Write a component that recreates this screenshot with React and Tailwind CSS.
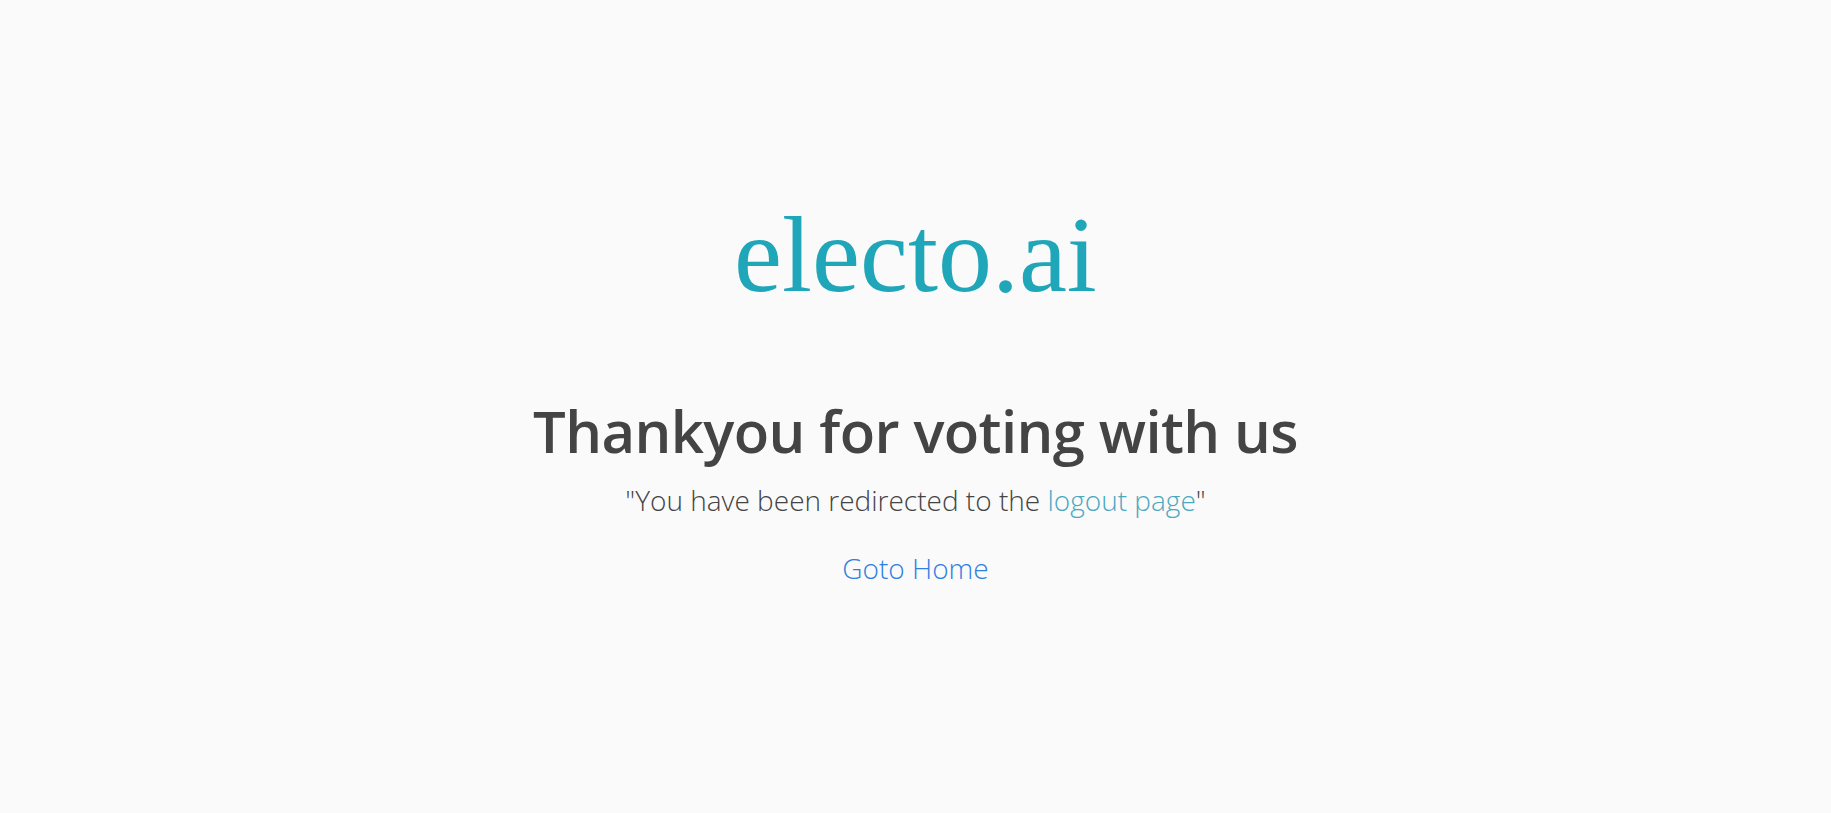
export default function App() {
  return (
    <div className="min-h-[813px] w-full bg-[#fafafa] flex flex-col items-center pt-[201px] font-['Open_Sans',sans-serif]">
      <div className="text-[108px] leading-[108px] text-[#1fa6b8] font-['Liberation_Serif','Times_New_Roman',serif]">
        electo.ai
      </div>
      <h1 className="mt-[86px] text-[58px] leading-[72px] font-semibold tracking-[-0.6px] text-[#444444]">
        Thankyou for voting with us
      </h1>
      <p className="mt-[15px] text-[28px] leading-[36px] font-light text-[#444444]">
        "You have been redirected to the <a className="text-[#4aa8c1]">logout page</a>"
      </p>
      <a className="mt-[32px] text-[28px] leading-[36px] font-light text-[#2f80e0]">
        Goto Home
      </a>
    </div>
  );
}
